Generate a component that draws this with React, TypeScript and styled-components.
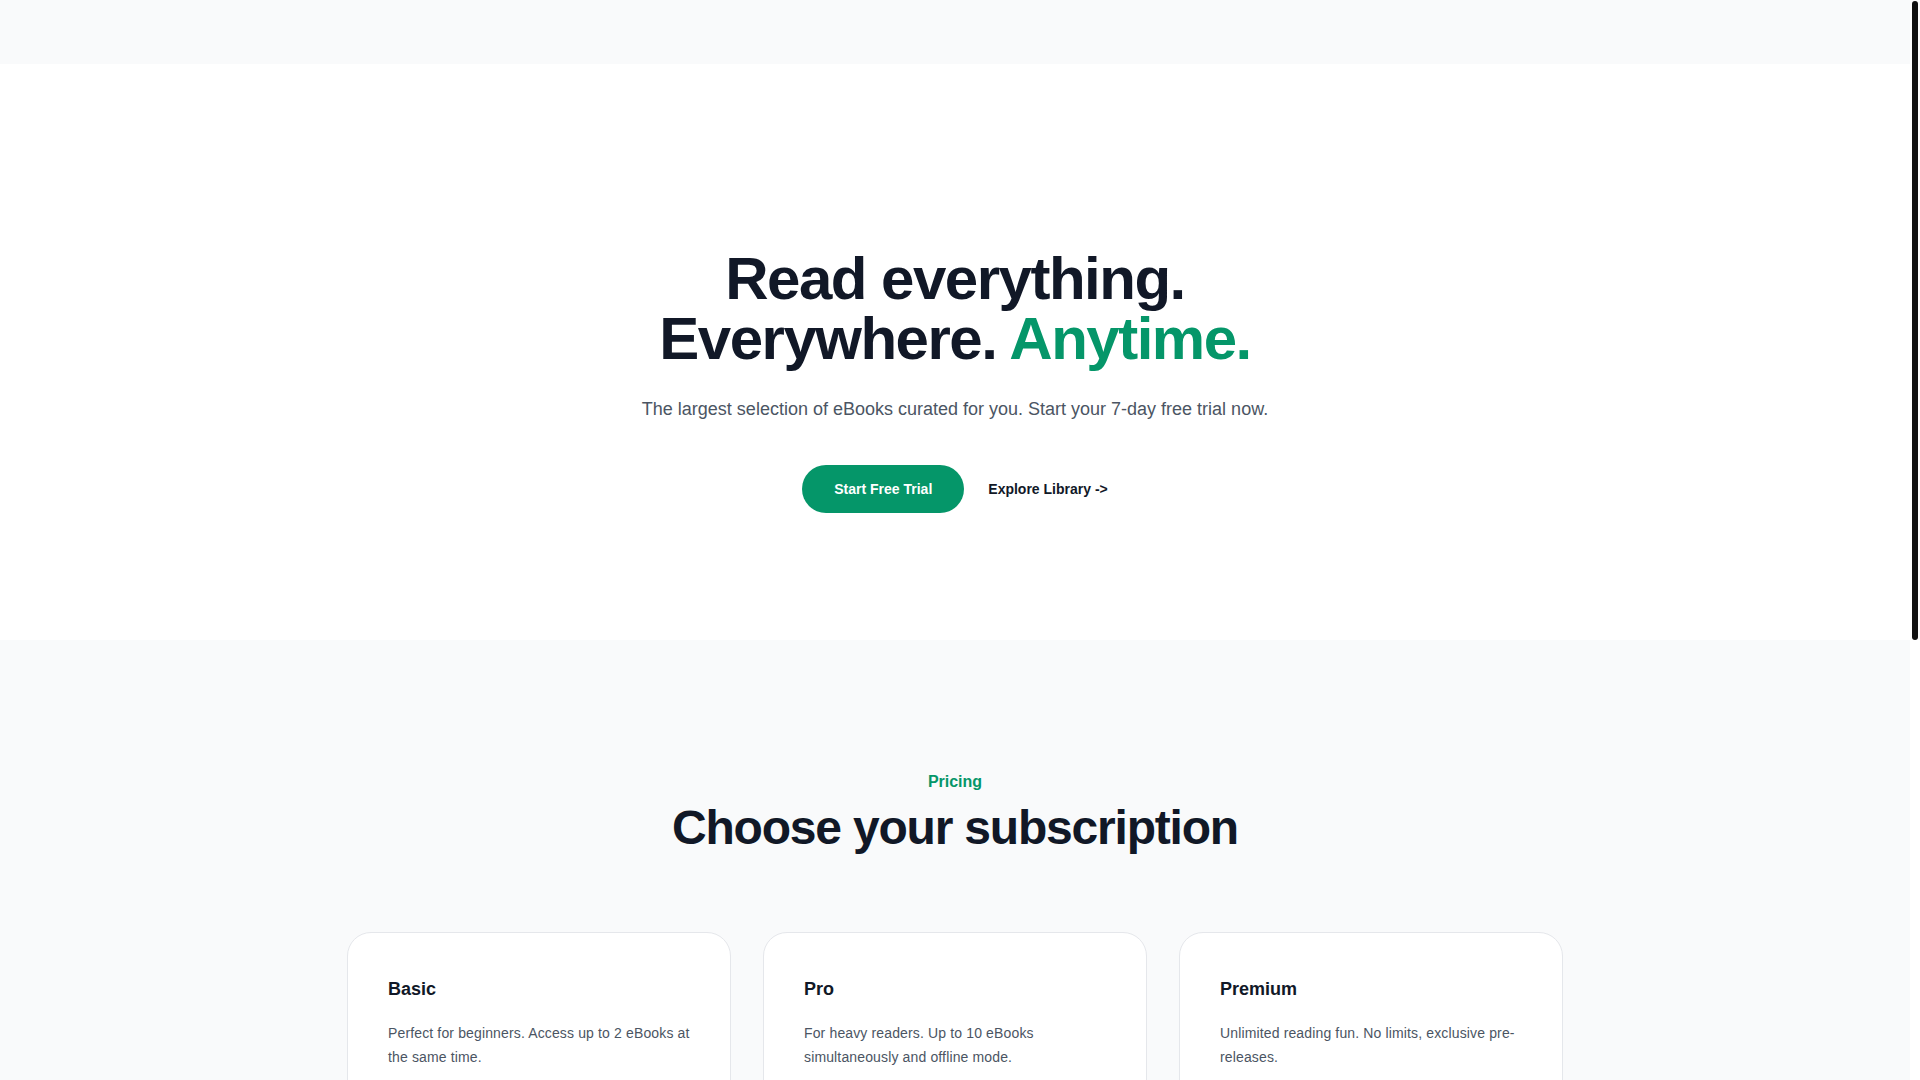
import React from "react";
import styled, { createGlobalStyle } from "styled-components";

const GlobalStyle = createGlobalStyle`
  *, *::before, *::after { box-sizing: border-box; }
  html, body { margin: 0; padding: 0; }
  body {
    font-family: "Liberation Sans", Arial, Helvetica, sans-serif;
    background: #ffffff;
    color: #111827;
    -webkit-font-smoothing: antialiased;
  }
`;

const Shell = styled.div`
  display: flex;
  align-items: flex-start;
  background: #ffffff;
`;

const ScrollRail = styled.div`
  position: sticky;
  top: 0;
  flex: 0 0 10px;
  height: 100vh;
  padding: 1px 2px 0 2px;
  background: #ffffff;
`;

const ScrollThumb = styled.div`
  height: 639px;
  border-radius: 3px;
  background: #111111;
`;

const Page = styled.div`
  flex: 1;
  min-width: 0;
  display: flex;
  flex-direction: column;
`;

const Header = styled.header`
  height: 64px;
  background: #f9fafb;
  display: flex;
  align-items: center;
`;

const Hero = styled.section`
  background: #ffffff;
  padding: 185px 32px 127px;
  display: flex;
  flex-direction: column;
  align-items: center;
  text-align: center;
`;

const HeroTitle = styled.h1`
  margin: 0;
  font-size: 60px;
  line-height: 60px;
  font-weight: 700;
  letter-spacing: -0.025em;
  color: #111827;
`;

const Accent = styled.span`
  color: #059669;
`;

const Lead = styled.p`
  margin: 24px 0 0;
  font-size: 18px;
  line-height: 32px;
  color: #4b5563;
`;

const Actions = styled.div`
  margin-top: 40px;
  display: flex;
  align-items: center;
  gap: 24px;
`;

const PrimaryButton = styled.a`
  display: inline-flex;
  align-items: center;
  justify-content: center;
  height: 48px;
  padding: 0 32px;
  border-radius: 9999px;
  background: #059669;
  color: #ffffff;
  font-size: 14px;
  line-height: 20px;
  font-weight: 700;
  text-decoration: none;
`;

const TextLink = styled.a`
  font-size: 14px;
  line-height: 24px;
  font-weight: 700;
  color: #111827;
  text-decoration: none;
`;

const Pricing = styled.section`
  background: #f9fafb;
  padding: 128px 0 128px;
`;

const Container = styled.div`
  max-width: 1280px;
  margin: 0 auto;
  padding: 0 32px;
`;

const SectionHead = styled.div`
  display: flex;
  flex-direction: column;
  align-items: center;
  text-align: center;
`;

const Eyebrow = styled.h2`
  margin: 0;
  font-size: 16px;
  line-height: 28px;
  font-weight: 700;
  color: #059669;
`;

const SectionTitle = styled.p`
  margin: 8px 0 0;
  font-size: 48px;
  line-height: 48px;
  font-weight: 700;
  letter-spacing: -0.025em;
  color: #111827;
`;

const Grid = styled.div`
  margin-top: 80px;
  display: grid;
  grid-template-columns: repeat(3, 1fr);
  gap: 32px;
`;

const Card = styled.div`
  background: #ffffff;
  border: 1px solid #e5e7eb;
  border-radius: 24px;
  padding: 40px;
  display: flex;
  flex-direction: column;
`;

const CardTitle = styled.h3`
  margin: 0;
  font-size: 18px;
  line-height: 32px;
  font-weight: 700;
  color: #111827;
`;

const CardText = styled.p`
  margin: 16px 0 0;
  font-size: 14px;
  line-height: 24px;
  letter-spacing: 0.01em;
  color: #4b5563;
`;

const Price = styled.p`
  margin: 24px 0 0;
  display: flex;
  align-items: baseline;
  gap: 4px;
`;

const Amount = styled.span`
  font-size: 36px;
  line-height: 40px;
  font-weight: 700;
  letter-spacing: -0.025em;
  color: #111827;
`;

const Period = styled.span`
  font-size: 14px;
  line-height: 24px;
  font-weight: 600;
  color: #4b5563;
`;

const CardButton = styled.a<{ $primary?: boolean }>`
  margin-top: 24px;
  display: block;
  text-align: center;
  padding: 8px 12px;
  border-radius: 9999px;
  font-size: 14px;
  line-height: 24px;
  font-weight: 700;
  text-decoration: none;
  background: ${(p) => (p.$primary ? "#059669" : "transparent")};
  color: ${(p) => (p.$primary ? "#ffffff" : "#059669")};
  border: 1px solid ${(p) => (p.$primary ? "#059669" : "#a7f3d0")};
`;

const Features = styled.ul`
  margin: 32px 0 0;
  padding: 0;
  list-style: none;
  display: flex;
  flex-direction: column;
  gap: 12px;
`;

const Feature = styled.li`
  display: flex;
  gap: 12px;
  font-size: 14px;
  line-height: 24px;
  color: #4b5563;
`;

const Check = () => (
  <svg width="20" height="24" viewBox="0 0 20 20" fill="none" stroke="#059669" strokeWidth="2" strokeLinecap="round" strokeLinejoin="round">
    <path d="M4 10.5l4 4 8-9" />
  </svg>
);

const Footer = styled.footer`
  background: #ffffff;
  padding: 48px 32px;
  height: 255px;
  display: flex;
  align-items: center;
  justify-content: center;
  font-size: 12px;
  line-height: 20px;
  color: #6b7280;
`;

const plans = [
  {
    name: "Basic",
    text: "Perfect for beginners. Access up to 2 eBooks at the same time.",
    price: "$4.99",
    features: ["2 eBooks at a time", "Sync across devices", "Basic support", "Cancel anytime", "7-day free trial"],
  },
  {
    name: "Pro",
    text: "For heavy readers. Up to 10 eBooks simultaneously and offline mode.",
    price: "$9.99",
    features: ["10 eBooks at a time", "Offline mode", "Sync across devices", "Priority support", "7-day free trial"],
    primary: true,
  },
  {
    name: "Premium",
    text: "Unlimited reading fun. No limits, exclusive pre-releases.",
    price: "$14.99",
    features: ["Unlimited eBooks", "Exclusive pre-releases", "Offline mode", "Premium support", "7-day free trial"],
  },
];

export default function App() {
  return (
    <>
      <GlobalStyle />
      <Shell>
        <Page>
          <Header />
          <Hero>
            <HeroTitle>
              Read everything.
              <br />
              Everywhere. <Accent>Anytime.</Accent>
            </HeroTitle>
            <Lead>The largest selection of eBooks curated for you. Start your 7-day free trial now.</Lead>
            <Actions>
              <PrimaryButton href="#">Start Free Trial</PrimaryButton>
              <TextLink href="#">Explore Library -&gt;</TextLink>
            </Actions>
          </Hero>
          <Pricing>
            <Container>
              <SectionHead>
                <Eyebrow>Pricing</Eyebrow>
                <SectionTitle>Choose your subscription</SectionTitle>
              </SectionHead>
              <Grid>
                {plans.map((p) => (
                  <Card key={p.name}>
                    <CardTitle>{p.name}</CardTitle>
                    <CardText>{p.text}</CardText>
                    <Price>
                      <Amount>{p.price}</Amount>
                      <Period>/month</Period>
                    </Price>
                    <CardButton href="#" $primary={p.primary}>Choose plan</CardButton>
                    <Features>
                      {p.features.map((f) => (
                        <Feature key={f}>
                          <Check />
                          {f}
                        </Feature>
                      ))}
                    </Features>
                  </Card>
                ))}
              </Grid>
            </Container>
          </Pricing>
          <Footer>© 2024 eBook Library. All rights reserved.</Footer>
        </Page>
        <ScrollRail>
          <ScrollThumb />
        </ScrollRail>
      </Shell>
    </>
  );
}
